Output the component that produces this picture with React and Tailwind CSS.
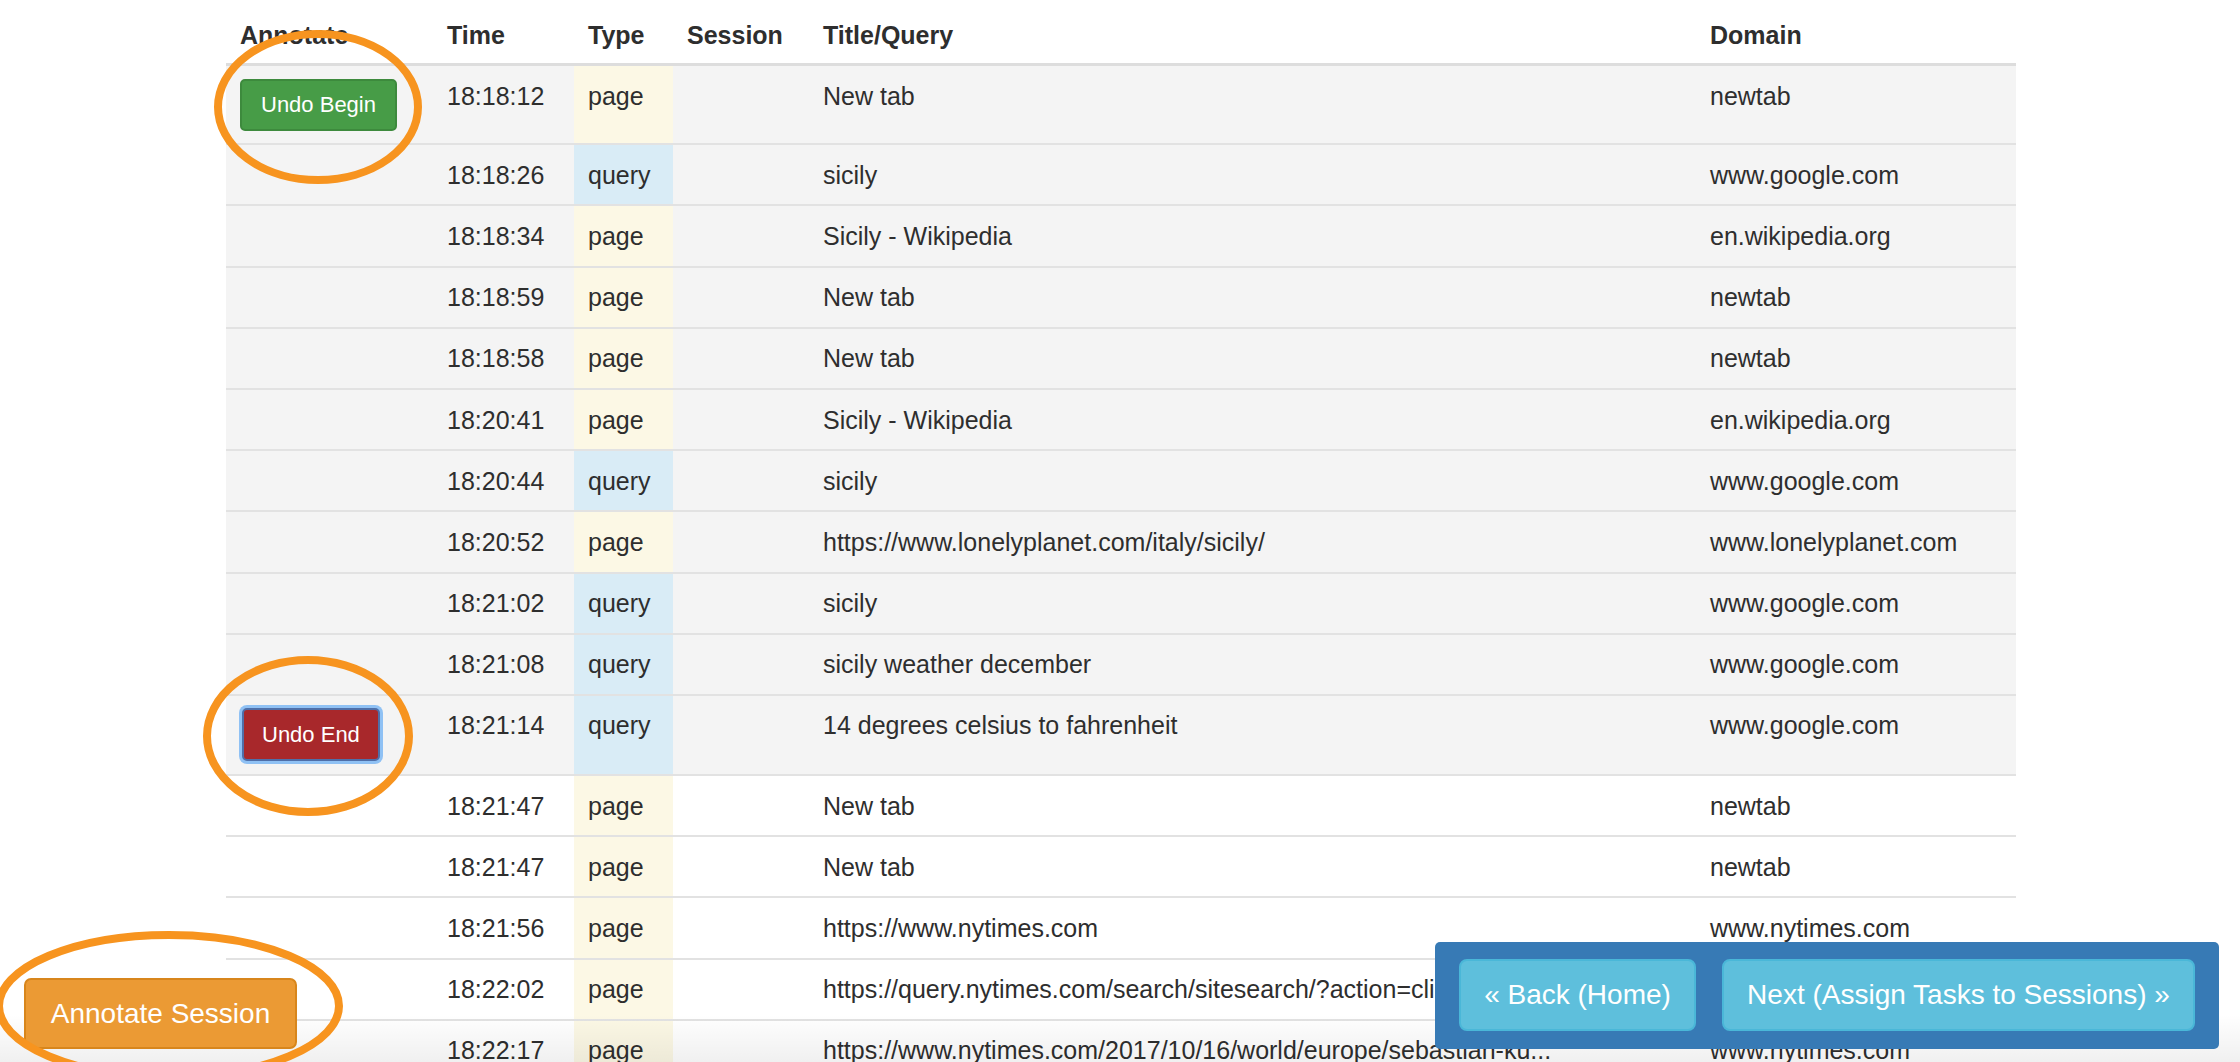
import React from "react";

const rows = [
  { t: "18:18:12", type: "page", title: "New tab", domain: "newtab", hl: true, btn: "begin" },
  { t: "18:18:26", type: "query", title: "sicily", domain: "www.google.com", hl: true },
  { t: "18:18:34", type: "page", title: "Sicily - Wikipedia", domain: "en.wikipedia.org", hl: true },
  { t: "18:18:59", type: "page", title: "New tab", domain: "newtab", hl: true },
  { t: "18:18:58", type: "page", title: "New tab", domain: "newtab", hl: true },
  { t: "18:20:41", type: "page", title: "Sicily - Wikipedia", domain: "en.wikipedia.org", hl: true },
  { t: "18:20:44", type: "query", title: "sicily", domain: "www.google.com", hl: true },
  { t: "18:20:52", type: "page", title: "https://www.lonelyplanet.com/italy/sicily/", domain: "www.lonelyplanet.com", hl: true },
  { t: "18:21:02", type: "query", title: "sicily", domain: "www.google.com", hl: true },
  { t: "18:21:08", type: "query", title: "sicily weather december", domain: "www.google.com", hl: true },
  { t: "18:21:14", type: "query", title: "14 degrees celsius to fahrenheit", domain: "www.google.com", hl: true, btn: "end" },
  { t: "18:21:47", type: "page", title: "New tab", domain: "newtab" },
  { t: "18:21:47", type: "page", title: "New tab", domain: "newtab" },
  { t: "18:21:56", type: "page", title: "https://www.nytimes.com", domain: "www.nytimes.com" },
  { t: "18:22:02", type: "page", title: "https://query.nytimes.com/search/sitesearch/?action=click&contentCol...", domain: "query.nytimes.com" },
  { t: "18:22:17", type: "page", title: "https://www.nytimes.com/2017/10/16/world/europe/sebastian-ku...", domain: "www.nytimes.com" },
];

const td = "px-[14px] py-[12.6px] leading-[34px] align-top border-t-2 border-[#e2e2e2]";
const th = "px-[14px] pt-[18px] pb-[11px] leading-[34px] text-left font-bold align-bottom border-b-[3px] border-[#dddddd]";

export default function App() {
  return (
    <div
      className="relative w-[2240px] h-[1062px] overflow-hidden bg-white text-[#2e2e2e] text-[25px]"
      style={{ fontFamily: '"Liberation Sans", Arial, Helvetica, sans-serif' }}
    >
      <table className="ml-[226px] w-[1790px] table-fixed border-collapse">
        <colgroup>
          <col className="w-[207px]" />
          <col className="w-[141px]" />
          <col className="w-[99px]" />
          <col className="w-[136px]" />
          <col className="w-[887px]" />
          <col className="w-[320px]" />
        </colgroup>
        <thead>
          <tr>
            <th className={th}>Annotate</th>
            <th className={th}>Time</th>
            <th className={`${th} px-[12px]`}>Type</th>
            <th className={th}>Session</th>
            <th className={th}>Title/Query</th>
            <th className={th}>Domain</th>
          </tr>
        </thead>
        <tbody>
          {rows.map((r, i) => (
            <tr key={i} className={r.hl ? "bg-[#f4f4f4]" : "bg-white"}>
              <td className={td}>
                {r.btn === "begin" && (
                  <button className="h-[52px] px-[19px] rounded-[5px] bg-[#479c47] border-2 border-[#3d8a3d] text-white text-[22px] leading-[30px] whitespace-nowrap">
                    Undo Begin
                  </button>
                )}
                {r.btn === "end" && (
                  <button className="h-[53px] px-[18px] ml-[2px] rounded-[5px] bg-[#a8282b] border-2 border-[#4f6fa8] text-white text-[22px] leading-[30px] whitespace-nowrap shadow-[0_0_0_3px_#8fc1f4]">
                    Undo End
                  </button>
                )}
              </td>
              <td className={td}>{r.t}</td>
              <td className={`${td} px-[13px] ${r.type === "page" ? "bg-[#fcf8e5]" : "bg-[#d9ecf6]"}`}>{r.type}</td>
              <td className={td}></td>
              <td className={`${td} whitespace-nowrap overflow-hidden`}>{r.title}</td>
              <td className={`${td} whitespace-nowrap`}>{r.domain}</td>
            </tr>
          ))}
        </tbody>
      </table>

      {/* bottom shade */}
      <div className="pointer-events-none absolute left-0 right-0 bottom-0 h-[48px] bg-linear-to-b from-transparent to-black/[0.06]" />

      {/* Annotate Session fixed button */}
      <button className="absolute left-[24px] top-[978px] w-[273px] h-[71px] rounded-[7px] bg-[#eb9a34] border-2 border-[#d8861c] text-white text-[28px] leading-[36px] whitespace-nowrap">
        Annotate Session
      </button>

      {/* Navigation box */}
      <div className="absolute left-[1435px] top-[942px] w-[784px] h-[107px] rounded-[5px] bg-[#377ab5] flex items-start gap-[26px] pl-[24px] pt-[17px]">
        <button className="w-[237px] h-[72px] rounded-[8px] bg-[#5ebfdc] border-2 border-[#4ab7d8] text-white text-[28px] leading-[36px] whitespace-nowrap">
          « Back (Home)
        </button>
        <button className="w-[473px] h-[72px] rounded-[8px] bg-[#5ebfdc] border-2 border-[#4ab7d8] text-white text-[28px] leading-[36px] whitespace-nowrap">
          Next (Assign Tasks to Sessions) »
        </button>
      </div>

      {/* orange annotation ellipses */}
      <svg className="pointer-events-none absolute left-0 top-0" width="2240" height="1062">
        <ellipse cx="318" cy="107" rx="100" ry="73" fill="none" stroke="#f7941f" strokeWidth="8" />
        <ellipse cx="308" cy="736" rx="101" ry="76" fill="none" stroke="#f7941f" strokeWidth="8" />
        <ellipse cx="169" cy="1006" rx="170" ry="71" fill="none" stroke="#f7941f" strokeWidth="8" />
      </svg>
    </div>
  );
}
